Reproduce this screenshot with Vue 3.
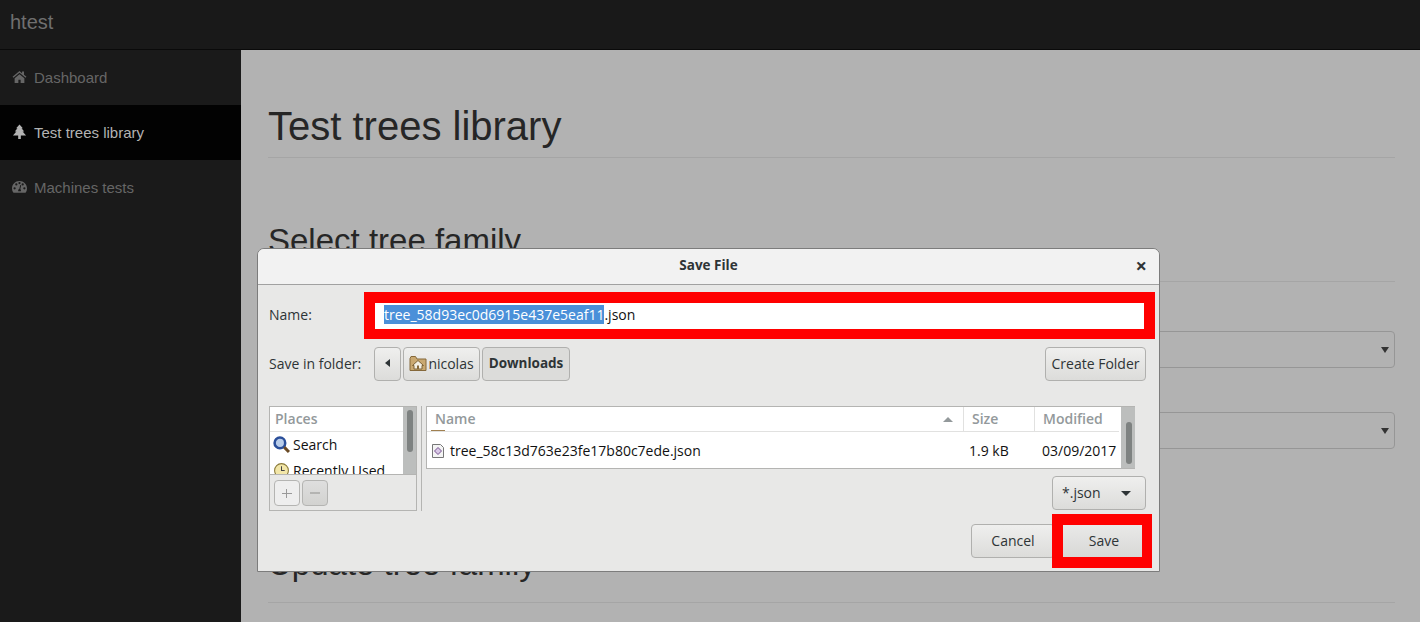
<script setup>
const navItems = [
  { label: 'Dashboard', icon: 'home' },
  { label: 'Test trees library', icon: 'tree', active: true },
  { label: 'Machines tests', icon: 'gauge' }
]
</script>

<template>
  <div class="page">
    <header class="topbar"><span class="brand">htest</span></header>
    <div class="body">
      <nav class="side">
        <a v-for="n in navItems" :key="n.label" class="nav" :class="{ active: n.active }">
          <svg class="fa" viewBox="0 0 16 16">
            <path v-if="n.icon === 'home'" d="M8 1.500.6 7.700l.9 1.100L8 3.400l6.500 5.400.9-1.100-2.600-2.200V2.200h-2.100v1.700zM2.800 9.300V14.500h4V11h2.400v3.500h4V9.300L8 5z" />
            <path v-else-if="n.icon === 'tree'" d="M8 0 11.600 4H10.200L13 7.400H11.300L15 11.700 9.400 11.700V15.500H6.600V11.700L1 11.700 4.700 7.400H3L5.800 4H4.400z" />
            <path v-else fill-rule="evenodd" d="M8 1.500C3.500 1.500 0 5.100 0 9.500c0 1.500.4 2.900 1.100 4.100.2.300.4.400.7.400h12.400c.3 0 .5-.1.700-.4.700-1.200 1.100-2.600 1.100-4.100C16 5.100 12.500 1.500 8 1.500zM2.800 10.600a1.200 1.200 0 1 1 0-2.400 1.200 1.200 0 0 1 0 2.400zM4.600 6.500a1.200 1.200 0 1 1 0-2.400 1.200 1.200 0 0 1 0 2.400zM8 5a1.200 1.200 0 1 1 0-2.400A1.200 1.200 0 0 1 8 5zM13.200 10.600a1.200 1.200 0 1 1 0-2.400 1.200 1.200 0 0 1 0 2.400zM9.400 12.500H6.600c-.2-1.100.3-2.100 1.200-2.300l1-4.400 1 .2-1 4.400c.7.400 1 1.300.6 2.100zM11.400 6.500a1.200 1.200 0 1 1 0-2.400 1.200 1.200 0 0 1 0 2.400z" />
          </svg>
          <span>{{ n.label }}</span>
        </a>
      </nav>
      <main class="main">
        <h1 class="h1">Test trees library</h1>
        <h2 class="h2 first">Select tree family</h2>
        <div class="fake-select"><i class="caret"></i></div>
        <div class="fake-select second"><i class="caret"></i></div>
        <h2 class="h2 update">Update tree family</h2>
      </main>
    </div>

    <section class="dialog">
      <div class="title">
        <span class="title-text">Save File</span>
        <span class="close">×</span>
      </div>
      <div class="content">
        <div class="row name-row">
          <label class="label name-label">Name:</label>
          <div class="entry"><span class="sel">tree_58d93ec0d6915e437e5eaf11</span>.json</div>
        </div>
        <div class="row folder-row">
          <label class="label folder-label">Save in folder:</label>
          <button class="btn back"><i class="left"></i></button>
          <button class="btn crumb">
            <svg class="home-ico" viewBox="0 0 18 18">
              <path d="M1 4.500V16.500H17V5H8L6.500 2.500H2z" fill="#c9a871" stroke="#85683a" />
              <path d="M9 6.500 3.500 11.500H5V15H13V11.500H14.500z" fill="#f3efe4" stroke="#7d6236" />
              <rect x="8" y="11.500" width="2" height="3.500" fill="#85683a" />
            </svg>nicolas
          </button>
          <button class="btn crumb current">Downloads</button>
          <button class="btn create">Create Folder</button>
        </div>
        <div class="browser">
          <div class="places">
            <div class="places-top">
              <div class="places-list">
                <div class="head places-head">Places</div>
                <div class="place">
                  <svg class="pl-ico" viewBox="0 0 16 16">
                    <circle cx="6.500" cy="6.500" r="5" fill="#b9cdea" stroke="#2b4f9a" stroke-width="2.400" />
                    <path d="M10.500 10.500 15 15" stroke="#6a4a25" stroke-width="2.800" />
                  </svg>Search
                </div>
                <div class="place">
                  <svg class="pl-ico" viewBox="0 0 16 16">
                    <circle cx="8" cy="8" r="6.500" fill="#f2e6a8" stroke="#8a7a3a" />
                    <path d="M8 4v4h3" fill="none" stroke="#444" />
                  </svg>Recently Used
                </div>
              </div>
              <div class="scroll"><i class="thumb places-thumb"></i></div>
            </div>
            <div class="places-tools">
              <button class="tool add"><span class="plus"></span></button>
              <button class="tool remove"><span class="minus"></span></button>
            </div>
          </div>
          <div class="divider"></div>
          <div class="files-col">
            <div class="files">
              <div class="files-table">
                <div class="file-head">
                  <div class="head cname">Name<i class="sort"></i><b class="tick"></b></div>
                  <div class="head csize">Size</div>
                  <div class="head cmod">Modified</div>
                </div>
                <div class="file-row">
                  <div class="cname fname">
                    <svg class="file-ico" viewBox="0 0 14 16">
                      <path d="M1.500 1.500H9.500L12.500 4.500V14.500H1.500z" fill="#f4f4f4" stroke="#777" />
                      <path d="M7 4.500 10.500 8 7 11.500 3.500 8z" fill="#d9c8e6" stroke="#75508f" />
                    </svg>tree_58c13d763e23fe17b80c7ede.json
                  </div>
                  <div class="csize val vsize">1.9 kB</div>
                  <div class="cmod val vmod">03/09/2017</div>
                </div>
              </div>
              <div class="scroll file-scroll"><i class="thumb file-thumb"></i></div>
            </div>
            <div class="filter-row">
              <button class="btn filter"><span>*.json</span><i class="down"></i></button>
            </div>
          </div>
        </div>
        <div class="actions">
          <button class="btn cancel">Cancel</button>
          <div class="save-mark"><button class="btn save">Save</button></div>
        </div>
      </div>
    </section>
  </div>
</template>

<style>
html, body { margin: 0; background: #b2b2b2; overflow: hidden; }
</style>

<style scoped>
.page { position: relative; width: 1420px; height: 622px; overflow: hidden; font-family: "Liberation Sans", Arial, sans-serif; background: #b2b2b2; color: #262626; }
.topbar { box-sizing: border-box; height: 50px; background: #191919; border-bottom: 1px solid #0a0a0a; display: flex; align-items: center; padding: 0 0 5px 10px; }
.brand { font-size: 20px; color: #6f6f6f; }
.body { display: flex; height: 572px; }
.side { width: 241px; background: #1a1a1a; flex: none; }
.nav { box-sizing: border-box; display: flex; align-items: center; height: 55px; padding: 0 0 1px 12px; font-size: 15px; color: #666; }
.nav.active { background: #020202; color: #b3b3b3; }
.fa { width: 15px; height: 16px; margin-right: 7px; fill: currentColor; flex: none; }
.main { flex: 1; padding: 0 25px 0 27px; }
.h1 { margin: 51px 0 0; font-size: 40px; line-height: 50px; height: 56px; font-weight: 400; border-bottom: 1px solid #a5a5a5; }
.h2 { margin: 0; font-size: 33px; line-height: 40px; font-weight: 400; border-bottom: 1px solid #a5a5a5; }
.first { margin-top: 63px; height: 60px; }
.fake-select { position: relative; height: 35px; margin-top: 49px; border: 1px solid #969696; border-radius: 4px; }
.second { margin-top: 44px; }
.caret { position: absolute; right: 5px; top: 15px; width: 0; height: 0; border: 4px solid transparent; border-top: 6px solid #333; border-bottom: 0; }
.update { margin-top: 95px; height: 58px; }

.dialog { position: absolute; left: 257px; top: 248px; width: 903px; height: 324px; box-sizing: border-box; background: #e8e8e7; border: 1px solid #7c7c7c; border-radius: 7px 7px 0 0; font-family: "Open Sans", sans-serif; font-size: 14px; color: #2e3436; overflow: hidden; }
.title { box-sizing: border-box; position: relative; height: 36px; padding-bottom: 3px; background: #f2f2f2; border-bottom: 1px solid #a1a1a1; display: flex; align-items: center; justify-content: center; }
.title-text { font-weight: 700; font-size: 13.500px; }
.close { position: absolute; right: 12px; top: 5px; font-size: 20px; line-height: 24px; font-weight: 700; }
.content { padding: 7px 13px 0 11px; }
.row { display: flex; align-items: center; }
.label { flex: none; }
.name-row .label, .folder-row .label { position: relative; top: -1px; }
.name-label { width: 95px; }
.entry { flex: 1; height: 26px; margin-right: -9px; border: solid #f00; border-width: 11px 11px 10px; background: #fff; color: #111; line-height: 24px; padding-left: 9px; white-space: nowrap; }
.sel { background: #4a90d9; color: #fff; }
.folder-row { margin-top: 8px; }
.folder-label { width: 105px; }
.btn { box-sizing: border-box; height: 34px; border: 1px solid #b0b0ae; border-radius: 4px; background: linear-gradient(#efefee, #dcdcda); font: 14px "Open Sans", sans-serif; color: #2e3436; padding: 0 0 2px; margin: 0; display: flex; align-items: center; justify-content: center; }
.back { width: 27px; margin-right: 2px; }
.left { width: 0; height: 0; border: 4px solid transparent; border-right: 5px solid #2e3436; border-left: 0; }
.crumb { width: 77px; margin-right: 2px; }
.current { width: 88px; font-weight: 700; font-size: 13.500px; margin-right: 0; background: #dcdcda; }
.create { width: 101px; margin-left: auto; }
.home-ico { width: 18px; height: 18px; margin-right: 1px; }
.browser { display: flex; margin-top: 25px; }
.places { box-sizing: border-box; width: 148px; height: 105px; border: 1px solid #b4b4b2; flex: none; }
.places-top { display: flex; height: 67px; overflow: hidden; background: #fff; border-bottom: 1px solid #b4b4b2; }
.places-list { flex: 1; min-width: 0; }
.head { font-weight: 600; color: #93999b; height: 24px; line-height: 23px; background: #fff; border-bottom: 1px solid #e1e1e0; box-sizing: content-box; }
.places-head { padding-left: 5px; }
.place { display: flex; align-items: center; height: 25.500px; padding-left: 3px; color: #111; white-space: nowrap; }
.pl-ico { width: 17px; height: 17px; margin-right: 3px; }
.scroll { width: 13px; background: #bcbebd; flex: none; position: relative; }
.thumb { position: absolute; left: 4px; width: 6px; border-radius: 3px; background: #7e8281; }
.places-thumb { top: 3px; height: 42px; }
.places-tools { display: flex; gap: 2px; padding: 5px 0 0 4px; }
.tool { box-sizing: border-box; width: 26px; height: 26px; border: 1px solid #b4b4b2; border-radius: 4px; padding: 0; display: flex; align-items: center; justify-content: center; background: #eee; }
.remove { background: linear-gradient(#dedede, #d2d2d0); }
.plus { position: relative; width: 10px; height: 1px; background: #999; }
.plus::after { content: ""; position: absolute; left: 4px; top: -4px; width: 1px; height: 9px; background: #999; }
.minus { width: 10px; height: 2px; background: #b4b4b2; }
.divider { width: 1px; height: 105px; background: #b4b4b2; margin: 0 4px 0 4px; flex: none; }
.files-col { flex: 1; }
.files { display: flex; box-sizing: border-box; width: 709px; height: 63px; border: 1px solid #b4b4b2; background: #fff; }
.files-table { width: 694px; flex: none; }
.file-head, .file-row { display: flex; }
.file-head .head { border-right: 1px solid #e1e1e0; }
.file-head .cmod { border-right: 0; }
.cname { position: relative; width: 528px; padding-left: 8px; flex: none; }
.csize { width: 62px; padding-left: 8px; flex: none; }
.cmod { width: 76px; padding-left: 8px; flex: none; }
.sort { position: absolute; right: 10px; top: 10px; width: 0; height: 0; border: 5px solid transparent; border-bottom: 5px solid #93999b; border-top: 0; }
.tick { position: absolute; left: 4px; bottom: 0; width: 14px; height: 1px; background: #a08050; }
.file-row { height: 37px; align-items: center; color: #111; }
.fname { display: flex; align-items: center; padding-left: 4px; width: 532px; }
.file-ico { width: 14px; height: 16px; margin-right: 5px; }
.val { white-space: nowrap; }
.vsize { position: relative; left: -2px; }
.vmod { position: relative; left: 1px; }
.file-scroll { width: 13px; border-left: 1px solid #bcbebd; }
.file-thumb { top: 15px; height: 42px; }
.filter-row { display: flex; justify-content: flex-end; margin-top: 7px; }
.filter { width: 94px; justify-content: space-between; padding: 0 14px 2px 9px; }
.down { width: 0; height: 0; border: 5px solid transparent; border-top: 5px solid #2e3436; border-bottom: 0; margin-top: 2px; }
.actions { position: absolute; right: 7px; bottom: 3px; display: flex; align-items: center; }
.cancel { width: 84px; }
.save-mark { border: solid #f00; border-width: 11px 10px 11px 11px; margin-left: -3px; }
.save { width: 79px; height: 32px; border: 0; border-radius: 0; background: linear-gradient(#e9e9e8, #d8d8d6); padding-left: 3px; }
</style>
